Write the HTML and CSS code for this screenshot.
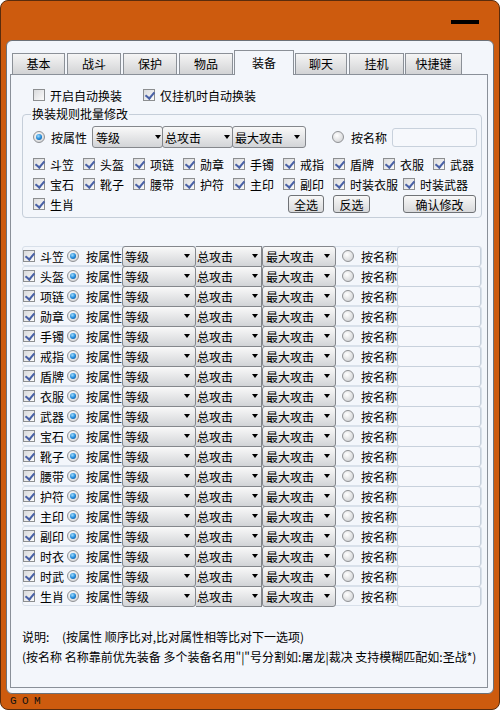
FILE: index.html
```html
<!DOCTYPE html>
<html lang="zh-CN">
<head>
<meta charset="utf-8">
<title>装备</title>
<link rel="stylesheet" href="styles.css">
</head>
<body>
<div class="win">
  <div class="titlebar"><span class="min"></span></div>
  <div class="panel">
    <div class="tabs">
      <div class="tab t1">基本</div>
      <div class="tab">战斗</div>
      <div class="tab">保护</div>
      <div class="tab">物品</div>
      <div class="tab active">装备</div>
      <div class="tab t6">聊天</div>
      <div class="tab t7">挂机</div>
      <div class="tab t8">快捷键</div>
    </div>
    <div class="content">
      <div class="toprow">
        <label class="opt"><span class="cb"></span>开启自动换装</label>
        <label class="opt"><span class="cb on"></span>仅挂机时自动换装</label>
      </div>
      <fieldset class="group">
        <legend>换装规则批量修改</legend>
        <div class="grow1">
          <span class="rd on"></span>
          <span class="lbl-attr">按属性</span>
          <span class="sel gs1"><span class="sv">等级</span><i class="arr"></i></span>
          <span class="sel gs2"><span class="sv">总攻击</span><i class="arr"></i></span>
          <span class="sel gs3"><span class="sv">最大攻击</span><i class="arr"></i></span>
          <span class="rd g-rd2"></span>
          <span class="lbl-name">按名称</span>
          <span class="tbox g-tbox"></span>
        </div>
        <div class="checks">
          <div class="grow">
            <label class="cell"><span class="cb on"></span>斗笠</label>
            <label class="cell"><span class="cb on"></span>头盔</label>
            <label class="cell"><span class="cb on"></span>项链</label>
            <label class="cell"><span class="cb on"></span>勋章</label>
            <label class="cell"><span class="cb on"></span>手镯</label>
            <label class="cell"><span class="cb on"></span>戒指</label>
            <label class="cell"><span class="cb on"></span>盾牌</label>
            <label class="cell"><span class="cb on"></span>衣服</label>
            <label class="cell"><span class="cb on"></span>武器</label>
          </div>
          <div class="grow">
            <label class="cell"><span class="cb on"></span>宝石</label>
            <label class="cell"><span class="cb on"></span>靴子</label>
            <label class="cell"><span class="cb on"></span>腰带</label>
            <label class="cell"><span class="cb on"></span>护符</label>
            <label class="cell"><span class="cb on"></span>主印</label>
            <label class="cell"><span class="cb on"></span>副印</label>
            <label class="cell w70"><span class="cb on"></span>时装衣服</label>
            <label class="cell"><span class="cb on"></span>时装武器</label>
          </div>
          <div class="grow">
            <label class="cell"><span class="cb on"></span>生肖</label>
            <span class="btn b1">全选</span>
            <span class="btn b2">反选</span>
            <span class="btn b3">确认修改</span>
          </div>
        </div>
      </fieldset>

      <div class="list">
        <div class="row"><span class="cb on"></span><span class="name">斗笠</span><span class="rd on"></span><span class="lbl-attr">按属性</span><span class="sel rs1"><span class="sv">等级</span><i class="arr"></i></span><span class="sel rs2"><span class="sv">总攻击</span><i class="arr"></i></span><span class="sel rs3"><span class="sv">最大攻击</span><i class="arr"></i></span><span class="rd r-rd2"></span><span class="lbl-name">按名称</span><span class="tbox r-tbox"></span></div>
        <div class="row"><span class="cb on"></span><span class="name">头盔</span><span class="rd on"></span><span class="lbl-attr">按属性</span><span class="sel rs1"><span class="sv">等级</span><i class="arr"></i></span><span class="sel rs2"><span class="sv">总攻击</span><i class="arr"></i></span><span class="sel rs3"><span class="sv">最大攻击</span><i class="arr"></i></span><span class="rd r-rd2"></span><span class="lbl-name">按名称</span><span class="tbox r-tbox"></span></div>
        <div class="row"><span class="cb on"></span><span class="name">项链</span><span class="rd on"></span><span class="lbl-attr">按属性</span><span class="sel rs1"><span class="sv">等级</span><i class="arr"></i></span><span class="sel rs2"><span class="sv">总攻击</span><i class="arr"></i></span><span class="sel rs3"><span class="sv">最大攻击</span><i class="arr"></i></span><span class="rd r-rd2"></span><span class="lbl-name">按名称</span><span class="tbox r-tbox"></span></div>
        <div class="row"><span class="cb on"></span><span class="name">勋章</span><span class="rd on"></span><span class="lbl-attr">按属性</span><span class="sel rs1"><span class="sv">等级</span><i class="arr"></i></span><span class="sel rs2"><span class="sv">总攻击</span><i class="arr"></i></span><span class="sel rs3"><span class="sv">最大攻击</span><i class="arr"></i></span><span class="rd r-rd2"></span><span class="lbl-name">按名称</span><span class="tbox r-tbox"></span></div>
        <div class="row"><span class="cb on"></span><span class="name">手镯</span><span class="rd on"></span><span class="lbl-attr">按属性</span><span class="sel rs1"><span class="sv">等级</span><i class="arr"></i></span><span class="sel rs2"><span class="sv">总攻击</span><i class="arr"></i></span><span class="sel rs3"><span class="sv">最大攻击</span><i class="arr"></i></span><span class="rd r-rd2"></span><span class="lbl-name">按名称</span><span class="tbox r-tbox"></span></div>
        <div class="row"><span class="cb on"></span><span class="name">戒指</span><span class="rd on"></span><span class="lbl-attr">按属性</span><span class="sel rs1"><span class="sv">等级</span><i class="arr"></i></span><span class="sel rs2"><span class="sv">总攻击</span><i class="arr"></i></span><span class="sel rs3"><span class="sv">最大攻击</span><i class="arr"></i></span><span class="rd r-rd2"></span><span class="lbl-name">按名称</span><span class="tbox r-tbox"></span></div>
        <div class="row"><span class="cb on"></span><span class="name">盾牌</span><span class="rd on"></span><span class="lbl-attr">按属性</span><span class="sel rs1"><span class="sv">等级</span><i class="arr"></i></span><span class="sel rs2"><span class="sv">总攻击</span><i class="arr"></i></span><span class="sel rs3"><span class="sv">最大攻击</span><i class="arr"></i></span><span class="rd r-rd2"></span><span class="lbl-name">按名称</span><span class="tbox r-tbox"></span></div>
        <div class="row"><span class="cb on"></span><span class="name">衣服</span><span class="rd on"></span><span class="lbl-attr">按属性</span><span class="sel rs1"><span class="sv">等级</span><i class="arr"></i></span><span class="sel rs2"><span class="sv">总攻击</span><i class="arr"></i></span><span class="sel rs3"><span class="sv">最大攻击</span><i class="arr"></i></span><span class="rd r-rd2"></span><span class="lbl-name">按名称</span><span class="tbox r-tbox"></span></div>
        <div class="row"><span class="cb on"></span><span class="name">武器</span><span class="rd on"></span><span class="lbl-attr">按属性</span><span class="sel rs1"><span class="sv">等级</span><i class="arr"></i></span><span class="sel rs2"><span class="sv">总攻击</span><i class="arr"></i></span><span class="sel rs3"><span class="sv">最大攻击</span><i class="arr"></i></span><span class="rd r-rd2"></span><span class="lbl-name">按名称</span><span class="tbox r-tbox"></span></div>
        <div class="row"><span class="cb on"></span><span class="name">宝石</span><span class="rd on"></span><span class="lbl-attr">按属性</span><span class="sel rs1"><span class="sv">等级</span><i class="arr"></i></span><span class="sel rs2"><span class="sv">总攻击</span><i class="arr"></i></span><span class="sel rs3"><span class="sv">最大攻击</span><i class="arr"></i></span><span class="rd r-rd2"></span><span class="lbl-name">按名称</span><span class="tbox r-tbox"></span></div>
        <div class="row"><span class="cb on"></span><span class="name">靴子</span><span class="rd on"></span><span class="lbl-attr">按属性</span><span class="sel rs1"><span class="sv">等级</span><i class="arr"></i></span><span class="sel rs2"><span class="sv">总攻击</span><i class="arr"></i></span><span class="sel rs3"><span class="sv">最大攻击</span><i class="arr"></i></span><span class="rd r-rd2"></span><span class="lbl-name">按名称</span><span class="tbox r-tbox"></span></div>
        <div class="row"><span class="cb on"></span><span class="name">腰带</span><span class="rd on"></span><span class="lbl-attr">按属性</span><span class="sel rs1"><span class="sv">等级</span><i class="arr"></i></span><span class="sel rs2"><span class="sv">总攻击</span><i class="arr"></i></span><span class="sel rs3"><span class="sv">最大攻击</span><i class="arr"></i></span><span class="rd r-rd2"></span><span class="lbl-name">按名称</span><span class="tbox r-tbox"></span></div>
        <div class="row"><span class="cb on"></span><span class="name">护符</span><span class="rd on"></span><span class="lbl-attr">按属性</span><span class="sel rs1"><span class="sv">等级</span><i class="arr"></i></span><span class="sel rs2"><span class="sv">总攻击</span><i class="arr"></i></span><span class="sel rs3"><span class="sv">最大攻击</span><i class="arr"></i></span><span class="rd r-rd2"></span><span class="lbl-name">按名称</span><span class="tbox r-tbox"></span></div>
        <div class="row"><span class="cb on"></span><span class="name">主印</span><span class="rd on"></span><span class="lbl-attr">按属性</span><span class="sel rs1"><span class="sv">等级</span><i class="arr"></i></span><span class="sel rs2"><span class="sv">总攻击</span><i class="arr"></i></span><span class="sel rs3"><span class="sv">最大攻击</span><i class="arr"></i></span><span class="rd r-rd2"></span><span class="lbl-name">按名称</span><span class="tbox r-tbox"></span></div>
        <div class="row"><span class="cb on"></span><span class="name">副印</span><span class="rd on"></span><span class="lbl-attr">按属性</span><span class="sel rs1"><span class="sv">等级</span><i class="arr"></i></span><span class="sel rs2"><span class="sv">总攻击</span><i class="arr"></i></span><span class="sel rs3"><span class="sv">最大攻击</span><i class="arr"></i></span><span class="rd r-rd2"></span><span class="lbl-name">按名称</span><span class="tbox r-tbox"></span></div>
        <div class="row"><span class="cb on"></span><span class="name">时衣</span><span class="rd on"></span><span class="lbl-attr">按属性</span><span class="sel rs1"><span class="sv">等级</span><i class="arr"></i></span><span class="sel rs2"><span class="sv">总攻击</span><i class="arr"></i></span><span class="sel rs3"><span class="sv">最大攻击</span><i class="arr"></i></span><span class="rd r-rd2"></span><span class="lbl-name">按名称</span><span class="tbox r-tbox"></span></div>
        <div class="row"><span class="cb on"></span><span class="name">时武</span><span class="rd on"></span><span class="lbl-attr">按属性</span><span class="sel rs1"><span class="sv">等级</span><i class="arr"></i></span><span class="sel rs2"><span class="sv">总攻击</span><i class="arr"></i></span><span class="sel rs3"><span class="sv">最大攻击</span><i class="arr"></i></span><span class="rd r-rd2"></span><span class="lbl-name">按名称</span><span class="tbox r-tbox"></span></div>
        <div class="row"><span class="cb on"></span><span class="name">生肖</span><span class="rd on"></span><span class="lbl-attr">按属性</span><span class="sel rs1"><span class="sv">等级</span><i class="arr"></i></span><span class="sel rs2"><span class="sv">总攻击</span><i class="arr"></i></span><span class="sel rs3"><span class="sv">最大攻击</span><i class="arr"></i></span><span class="rd r-rd2"></span><span class="lbl-name">按名称</span><span class="tbox r-tbox"></span></div>
      </div>

      <div class="notes">
        <div><span class="nlbl">说明:</span>(按属性 顺序比对,比对属性相等比对下一选项)</div>
        <div>(按名称 名称靠前优先装备 多个装备名用"|"号分割如:屠龙|裁决 支持模糊匹配如:圣战*)</div>
      </div>
    </div>
  </div>
  <div class="footer">G O M</div>
</div>
</body>
</html>
```

FILE: styles.css
```css
* { box-sizing: border-box; }
html, body { margin: 0; padding: 0; }
body {
  background: #ffffff;
  font-family: "Noto Sans CJK SC", "Liberation Sans", sans-serif;
  font-size: 12px;
  color: #000;
}
label { display: flex; align-items: center; }

.win {
  width: 500px;
  height: 710px;
  background: #cd5b0e;
  border: 1px solid #5a2c0c;
  border-radius: 8px;
  display: flex;
  flex-direction: column;
}
.titlebar { height: 39px; display: flex; justify-content: flex-end; flex: none; }
.min { width: 28px; height: 4px; background: #000; margin: 19px 20px 0 0; }

.panel {
  height: 654px;
  flex: none;
  margin: 0 5px;
  background: #f3f6fb;
  border: 1px solid #6c7178;
  border-radius: 6px;
  padding-top: 9px;
  display: flex;
  flex-direction: column;
}

.tabs { display: flex; align-items: flex-end; height: 24px; padding-left: 5px; flex: none; }
.tab {
  height: 21px;
  width: 54px;
  margin-right: 2px;
  border: 1px solid #8b9097;
  border-bottom: none;
  background: linear-gradient(#f5f5f5, #d2d3d5);
  display: flex;
  align-items: center;
  justify-content: center;
  line-height: 1;
}
.tab.t1 { width: 53px; }
.tab.active {
  height: 25px;
  width: 60px;
  margin: 0 1px -1px -1px;
  background: #f3f6fb;
  position: relative;
  z-index: 1;
}
.tab.t6 { width: 52px; }
.tab.t7 { width: 55px; margin-right: 1px; }
.tab.t8 { width: 57px; }

.content {
  margin: 0 5px 0 3px;
  height: 614px;
  flex: none;
  border: 1px solid #8a9099;
  background: #f3f6fb;
}

/* controls */
.cb {
  width: 12px;
  height: 12px;
  flex: none;
  border: 1px solid #8c8e90;
  background: linear-gradient(135deg, #d9dadc, #fbfbfb);
  position: relative;
}
.cb.on::after {
  content: "";
  position: absolute;
  left: 3px;
  top: 0px;
  width: 4px;
  height: 7px;
  border: solid #4860a6;
  border-width: 0 2px 2px 0;
  transform: rotate(40deg);
}
.rd {
  width: 12px;
  height: 12px;
  flex: none;
  border-radius: 50%;
  border: 1px solid #8f9194;
  background: radial-gradient(circle at 40% 35%, #ffffff, #d2d3d5 85%);
  display: flex;
  align-items: center;
  justify-content: center;
}
.rd.on::after {
  content: "";
  width: 6px;
  height: 6px;
  border-radius: 50%;
  background: radial-gradient(circle at 40% 35%, #9fdcff, #1e86d6 55%, #0b4a8a);
}
.sel {
  display: flex;
  align-items: center;
  flex: none;
  border: 1px solid #84878c;
  border-radius: 3px;
  background: linear-gradient(#f9f9f9, #d2d4d7);
}
.sel .sv { flex: 1; white-space: nowrap; }
.arr {
  width: 0;
  height: 0;
  border-left: 3px solid transparent;
  border-right: 3px solid transparent;
  border-top: 4px solid #000;
  flex: none;
}
.tbox {
  flex: none;
  border: 1px solid #c8d1dc;
  border-radius: 3px;
  background: #f6f8fc;
}
.btn {
  flex: none;
  height: 18px;
  border: 1px solid #6f7276;
  border-radius: 3px;
  background: linear-gradient(#f8f8f8, #d8d9db);
  display: flex;
  align-items: center;
  justify-content: center;
}

/* top options */
.toprow { display: flex; align-items: center; height: 16px; margin-top: 12px; padding-left: 22px; }
.opt .cb { margin-right: 5px; }
.opt + .opt { margin-left: 21px; }

/* group box */
.group {
  margin: 3px 0 0 11px;
  width: 460px;
  min-width: 0;
  border: 1px solid #c5ced9;
  border-radius: 4px;
  padding: 0 0 3px 8px;
}
.group legend { padding: 0 1px; line-height: 16px; }
.grow1 { display: flex; align-items: center; height: 22px; margin-top: 4px; padding-left: 2px; }
.grow1 .lbl-attr { margin-left: 6px; }
.gs1 { margin-left: 5px; width: 71px; height: 22px; padding: 0 1px 0 3px; }
.gs2 { margin-left: -1px; width: 71px; height: 22px; padding: 0 2px 0 2px; }
.gs3 { margin-left: -1px; width: 74px; height: 22px; padding: 0 5px 0 2px; }
.g-rd2 { margin-left: 26px; }
.grow1 .lbl-name { margin-left: 7px; }
.g-tbox { margin-left: 5px; width: 85px; height: 19px; }

.checks { margin-top: 6px; }
.grow { display: flex; align-items: center; height: 20px; padding-left: 2px; }
.cell { width: 50px; flex: none; white-space: nowrap; }
.cell .cb { margin-right: 5px; }
.cell.w70 { width: 70px; }
.b1 { width: 36px; margin-left: 205px; }
.b2 { width: 37px; margin-left: 9px; }
.b3 { width: 73px; margin-left: 33px; }

/* rule list */
.list { margin: 28px 0 0 11px; width: 460px; }
.row {
  display: flex;
  align-items: center;
  height: 20px;
  border: 1px solid #d8e0ea;
  border-radius: 3px;
}
.row .name { margin-left: 5px; width: 24px; white-space: nowrap; }
.row .rd.on { margin-left: 3px; }
.row .lbl-attr { margin-left: 7px; white-space: nowrap; }
.rs1 { width: 74px; height: 21px; padding: 0 5px 0 2px; }
.rs2 { width: 66px; height: 21px; border-left: none; border-radius: 0; padding: 0 3px 0 1px; }
.rs3 { width: 74px; height: 21px; padding: 0 5px 0 3px; }
.r-rd2 { margin-left: 6px; }
.row .lbl-name { margin-left: 7px; white-space: nowrap; }
.r-tbox { width: 84px; height: 21px; }

/* notes */
.notes { margin: 21px 0 0 11px; line-height: 20px; white-space: nowrap; }
.nlbl { display: inline-block; width: 40px; }

.footer {
  flex: 1;
  padding-left: 9px;
  font-family: "Liberation Mono", monospace;
  font-size: 11px;
  letter-spacing: -0.6px;
  line-height: 15px;
  color: #111;
}
```
